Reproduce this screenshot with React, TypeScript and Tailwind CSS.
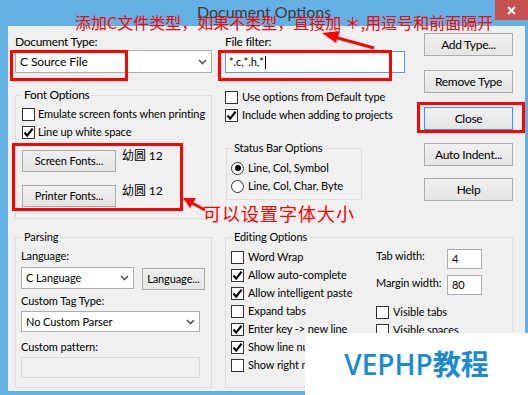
import React from "react";

function Check({ checked }: { checked?: boolean }) {
  return (
    <span className="w-[13px] h-[13px] border border-[#333] bg-white flex items-center justify-center shrink-0">
      {checked && (
        <svg width="11" height="11" viewBox="0 0 11 11">
          <path d="M1.5 5.5 L4.2 8.6 L9.6 1.6" stroke="#000" strokeWidth="2.2" fill="none" />
        </svg>
      )}
    </span>
  );
}

function CheckRow({ label, checked, gap = "gap-[4px]" }: { label: string; checked?: boolean; gap?: string }) {
  return (
    <div className={`h-[18px] flex items-center whitespace-nowrap ${gap}`}>
      <Check checked={checked} />
      <span>{label}</span>
    </div>
  );
}

function Radio({ label, checked }: { label: string; checked?: boolean }) {
  return (
    <div className="h-[18px] flex items-center gap-[4px] whitespace-nowrap">
      <span className="w-[13px] h-[13px] rounded-full border border-[#333] bg-white flex items-center justify-center shrink-0">
        {checked && <span className="w-[6px] h-[6px] rounded-full bg-black" />}
      </span>
      <span>{label}</span>
    </div>
  );
}

function Btn({ label, className = "", focused }: { label: string; className?: string; focused?: boolean }) {
  return (
    <div
      className={`flex items-center justify-center whitespace-nowrap border bg-linear-to-b from-[#f0f0f0] to-[#e5e5e5] ${
        focused ? "border-[#3399ff]" : "border-[#acacac]"
      } ${className}`}
    >
      {label}
    </div>
  );
}

function Chevron() {
  return (
    <svg width="9" height="6" viewBox="0 0 9 6">
      <path d="M1 1 L4.5 4.5 L8 1" stroke="#555" strokeWidth="1.6" fill="none" />
    </svg>
  );
}

function Select({ value, className = "" }: { value: string; className?: string }) {
  return (
    <div className={`bg-white border border-[#abadb3] flex items-center justify-between pl-[4px] pr-[4px] whitespace-nowrap ${className}`}>
      <span>{value}</span>
      <Chevron />
    </div>
  );
}

export default function App() {
  return (
    <div className="relative w-[528px] h-[395px] overflow-hidden bg-[#64b0e4] font-[Lato,'Noto_Sans_CJK_SC',sans-serif] text-[11px] tracking-[-0.1px] leading-[14px] text-black whitespace-nowrap">
      {/* title bar */}
      <div className="h-[26px] grid grid-cols-[1fr_auto_1fr] items-start">
        <div />
        <div className="text-[16px] leading-[20px] pt-[2px] tracking-normal text-[#3a3a3a]">Document Options</div>
        <div className="flex justify-end">
          <div className="w-[33px] h-[20px] bg-[#c75050] flex items-center justify-center">
            <svg width="9" height="9" viewBox="0 0 9 9">
              <path d="M1 1 L8 8 M8 1 L1 8" stroke="#fff" strokeWidth="2" />
            </svg>
          </div>
        </div>
      </div>

      {/* client area */}
      <div className="ml-[8px] mr-[3px] h-[365px] bg-[#f0f0f0] flex flex-col">
        {/* top section */}
        <div className="flex items-start pl-[7px] pt-[7px]">
          {/* left column */}
          <div className="w-[197px] flex flex-col">
            <div className="mt-[2px] text-[12px] tracking-[-0.3px]">Document Type:</div>
            <Select value="C Source File" className="mt-[1px] h-[23px] text-[12px]" />
            <fieldset className="mt-[15px] h-[131px] border border-[#dcdcdc]">
              <legend className="ml-[6px] px-[2px] leading-[14px] text-[12px] tracking-[-0.3px]">Font Options</legend>
              <div className="pl-[6px] pt-[3px] flex flex-col">
                <CheckRow label="Emulate screen fonts when printing" gap="gap-[3px]" />
                <CheckRow label="Line up white space" checked gap="gap-[3px]" />
                <div className="mt-[9px] flex items-start gap-[6px]">
                  <Btn label="Screen Fonts..." className="w-[94px] h-[22px]" />
                  <span className="mt-[-1px] text-[12px]">幼圆 12</span>
                </div>
                <div className="mt-[13px] flex items-start gap-[6px]">
                  <Btn label="Printer Fonts..." className="w-[94px] h-[22px]" />
                  <span className="mt-[-1px] text-[12px]">幼圆 12</span>
                </div>
              </div>
            </fieldset>
          </div>

          {/* middle column */}
          <div className="ml-[13px] w-[180px] flex flex-col">
            <div className="mt-[2px] text-[12px] tracking-[-0.3px]">File filter:</div>
            <div className="mt-[2px] h-[22px] bg-white border border-[#569de5] flex items-center pl-[3px]">
              <span>*.c,*.h,*</span>
              <span className="w-[1px] h-[13px] bg-black ml-[1px]" />
            </div>
            <div className="mt-[15px]">
              <CheckRow label="Use options from Default type" />
              <CheckRow label="Include when adding to projects" checked />
            </div>
            <fieldset className="mt-[17px] ml-[1px] w-[136px] h-[59px] border border-[#dcdcdc]">
              <legend className="ml-[5px] px-[2px] leading-[14px]">Status Bar Options</legend>
              <div className="pl-[4px] pt-[4px]">
                <Radio label="Line, Col, Symbol" checked />
                <Radio label="Line, Col, Char, Byte" />
              </div>
            </fieldset>
          </div>

          {/* right column */}
          <div className="ml-[19px] w-[89px] flex flex-col text-[12px] tracking-[-0.3px]">
            <Btn label="Add Type..." className="h-[23px]" />
            <Btn label="Remove Type" className="h-[23px] mt-[14px]" />
            <Btn label="Close" focused className="h-[23px] mt-[14px]" />
            <Btn label="Auto Indent..." className="h-[23px] mt-[13px]" />
            <Btn label="Help" className="h-[23px] mt-[12px]" />
          </div>
        </div>

        {/* bottom section */}
        <div className="flex items-start pl-[7px] mt-[11px]">
          <fieldset className="w-[197px] h-[158px] border border-[#dcdcdc]">
            <legend className="ml-[6px] px-[2px] leading-[14px]">Parsing</legend>
            <div className="pl-[5px] flex flex-col">
              <div className="mt-[5px]">Language:</div>
              <div className="mt-[4px] flex items-start">
                <Select value="C Language" className="w-[113px] h-[22px]" />
                <Btn label="Language..." className="ml-[8px] mt-[1px] w-[63px] h-[22px]" />
              </div>
              <div className="mt-[4px]">Custom Tag Type:</div>
              <Select value="No Custom Parser" className="mt-[3px] w-[179px] h-[21px]" />
              <div className="mt-[8px]">Custom pattern:</div>
              <div className="mt-[3px] w-[179px] h-[21px] border border-[#d9d9d9] bg-[#f0f0f0]" />
            </div>
          </fieldset>

          <fieldset className="ml-[13px] w-[288px] h-[158px] border border-[#dcdcdc]">
            <legend className="ml-[6px] px-[2px] leading-[14px]">Editing Options</legend>
            <div className="pl-[5px] flex items-start">
              <div className="w-[145px] mt-[4px] flex flex-col">
                <CheckRow label="Word Wrap" />
                <CheckRow label="Allow auto-complete" checked />
                <CheckRow label="Allow intelligent paste" checked />
                <CheckRow label="Expand tabs" />
                <CheckRow label="Enter key -> new line" checked />
                <CheckRow label="Show line numbers" checked />
                <CheckRow label="Show right margin" />
              </div>
              <div className="flex flex-col">
                <div className="mt-[5px] flex items-start">
                  <span className="w-[71px]">Tab width:</span>
                  <div className="w-[35px] h-[20px] bg-white border border-[#abadb3] flex items-center pl-[4px]">4</div>
                </div>
                <div className="mt-[6px] flex items-start">
                  <span className="w-[71px] mt-[1px]">Margin width:</span>
                  <div className="w-[35px] h-[20px] bg-white border border-[#abadb3] flex items-center pl-[4px]">80</div>
                </div>
                <div className="mt-[8px]">
                  <CheckRow label="Visible tabs" />
                  <CheckRow label="Visible spaces" />
                </div>
              </div>
            </div>
          </fieldset>
        </div>
      </div>

      {/* annotations (overlays) */}
      <div className="absolute left-[75px] top-[14px] text-[16px] leading-[17px] tracking-normal text-[#ff0000] whitespace-nowrap font-['Noto_Sans_CJK_SC',sans-serif]">
        添加C文件类型，如果不类型，直接加 ＊,用逗号和前面隔开
      </div>
      <svg className="absolute left-0 top-0" width="528" height="395" viewBox="0 0 528 395">
        <line x1="374" y1="48" x2="334" y2="37" stroke="#ff0000" strokeWidth="3" />
        <polygon points="322,33 340,31 336,43" fill="#ff0000" />
        <line x1="205" y1="210" x2="192" y2="203" stroke="#ff0000" strokeWidth="3" />
        <polygon points="183,198 196,198 190,208" fill="#ff0000" />
      </svg>
      <div className="absolute left-[10px] top-[50px] w-[118px] h-[31px] border-[3px] border-[#ff0000]" />
      <div className="absolute left-[218px] top-[50px] w-[174px] h-[31px] border-[3px] border-[#ff0000]" />
      <div className="absolute left-[417px] top-[102px] w-[108px] h-[31px] border-[3px] border-[#ff0000]" />
      <div className="absolute left-[12px] top-[143px] w-[171px] h-[68px] border-[3px] border-[#ff0000]" />
      <div className="absolute left-[203px] top-[203px] text-[18px] leading-[20px] tracking-[1px] text-[#ff0000] whitespace-nowrap font-['Noto_Sans_CJK_SC',sans-serif]">
        可以设置字体大小
      </div>

      {/* watermark */}
      <div className="absolute left-[305px] top-[333px] w-[223px] h-[62px] bg-white flex items-center justify-center">
        <span className="text-[28px] leading-[32px] tracking-normal font-semibold text-[#1c8ad0] font-['Open_Sans','Noto_Sans_CJK_SC',sans-serif]">
          VEPHP教程
        </span>
      </div>
    </div>
  );
}
